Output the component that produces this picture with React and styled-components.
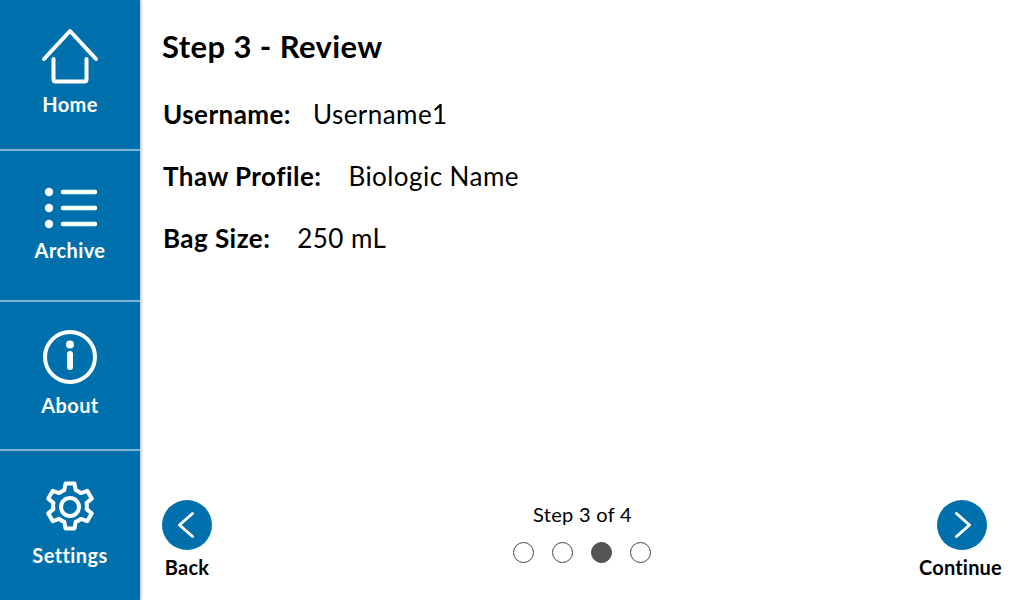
import React from 'react';
import styled, { createGlobalStyle } from 'styled-components';

const GlobalStyle = createGlobalStyle`
  html, body {
    margin: 0;
    padding: 0;
    background: #fff;
  }
  body {
    font-family: "Lato", "Noto Sans", sans-serif;
    color: #000;
  }
`;

const Screen = styled.div`
  display: flex;
  width: 1024px;
  height: 600px;
  overflow: hidden;
`;

const Sidebar = styled.nav`
  display: flex;
  flex-direction: column;
  flex: 0 0 140px;
  height: 600px;
  background: #0070ad;
  box-shadow: 1px 0 3px rgba(0, 0, 0, 0.3);
  z-index: 1;
`;

const NavItem = styled.div`
  display: flex;
  flex-direction: column;
  align-items: center;
  box-sizing: border-box;
  height: ${(p) => p.$height}px;
  padding-top: ${(p) => p.$top}px;
  color: #fff;
  border-bottom: ${(p) => (p.$last ? 'none' : '2px solid #7fb4d4')};
`;

const NavIcon = styled.svg`
  display: block;
  width: 60px;
  height: 60px;
  fill: none;
  stroke: #fff;
  stroke-width: 4;
  stroke-linecap: round;
  stroke-linejoin: round;
`;

const NavLabel = styled.span`
  margin-top: ${(p) => p.$gap}px;
  font-size: 20px;
  line-height: 24px;
  font-weight: 700;
  letter-spacing: 0.4px;
`;

const Main = styled.main`
  flex: 1;
  display: flex;
  flex-direction: column;
  padding: 29px 22px 0 22px;
`;

const Title = styled.h1`
  margin: 0 0 36px;
  font-size: 31px;
  line-height: 34px;
  font-weight: 700;
  letter-spacing: 0.4px;
`;

const Fields = styled.div`
  display: flex;
  flex-direction: column;
  gap: 32px;
  flex: 1;
  padding-left: 1px;
`;

const Field = styled.div`
  display: flex;
  gap: ${(p) => p.$gap}px;
  font-size: 26px;
  line-height: 30px;
  letter-spacing: 0.45px;
`;

const FieldName = styled.strong`
  font-weight: 700;
`;

const Footer = styled.div`
  display: flex;
  justify-content: space-between;
  align-items: flex-start;
  height: 100px;
`;

const NavButton = styled.div`
  display: flex;
  flex-direction: column;
  align-items: center;
  font-size: 20px;
  line-height: 24px;
  font-weight: 700;
  letter-spacing: 0.2px;
`;

const Round = styled.button`
  display: flex;
  align-items: center;
  justify-content: center;
  width: 50px;
  height: 50px;
  margin: 0 0 5px ${(p) => p.$nudge || 0}px;
  padding: 0;
  border: none;
  border-radius: 50%;
  background: #0070ad;
`;

const Chevron = styled.svg`
  width: 30px;
  height: 30px;
  fill: none;
  stroke: #fff;
  stroke-width: 3;
  stroke-linecap: round;
  stroke-linejoin: round;
`;

const Progress = styled.div`
  display: flex;
  flex-direction: column;
  align-items: center;
  margin-left: 34px;
  padding-top: 2px;
  font-size: 20px;
  line-height: 24px;
  letter-spacing: 0.3px;
`;

const Dots = styled.div`
  display: flex;
  gap: 18px;
  margin-top: 16px;
`;

const Dot = styled.span`
  box-sizing: border-box;
  width: 21px;
  height: 21px;
  border: 1.5px solid #444;
  border-radius: 50%;
  background: ${(p) => (p.$active ? '#555' : '#fff')};
`;

const Gear = () => (
  <NavIcon viewBox="0 0 60 60">
    <circle cx="30" cy="30" r="9" />
    <path d="M25.5 6.5h9l1.2 6.6a18 18 0 0 1 5.2 3l6.3-2.3 4.5 7.8-5.1 4.3a18 18 0 0 1 0 6.2l5.1 4.3-4.5 7.8-6.3-2.3a18 18 0 0 1-5.2 3l-1.2 6.6h-9l-1.2-6.6a18 18 0 0 1-5.2-3l-6.3 2.3-4.5-7.8 5.1-4.3a18 18 0 0 1 0-6.2l-5.1-4.3 4.5-7.8 6.3 2.3a18 18 0 0 1 5.2-3z" />
  </NavIcon>
);

export default function App() {
  return (
    <>
      <GlobalStyle />
      <Screen>
        <Sidebar>
          <NavItem $height={151} $top={26}>
            <NavIcon viewBox="0 0 60 60">
              <path d="M4 33 30 5l26 28" />
              <path d="M13.500 33v20.500a2 2 0 0 0 2 2h29a2 2 0 0 0 2-2V33" />
            </NavIcon>
            <NavLabel $gap={6}>Home</NavLabel>
          </NavItem>
          <NavItem $height={151} $top={27}>
            <NavIcon viewBox="0 0 60 60">
              <path d="M23 14h32M23 30h32M23 46h32" strokeWidth="4.500" />
              <circle cx="9" cy="14" r="4.200" fill="#fff" stroke="none" />
              <circle cx="9" cy="30" r="4.200" fill="#fff" stroke="none" />
              <circle cx="9" cy="46" r="4.200" fill="#fff" stroke="none" />
            </NavIcon>
            <NavLabel $gap={0}>Archive</NavLabel>
          </NavItem>
          <NavItem $height={149} $top={25}>
            <NavIcon viewBox="0 0 60 60">
              <circle cx="30" cy="30" r="25" />
              <path d="M30 27v13" strokeWidth="6" />
              <circle cx="30" cy="17.500" r="2" fill="#fff" />
            </NavIcon>
            <NavLabel $gap={6}>About</NavLabel>
          </NavItem>
          <NavItem $height={149} $top={26} $last>
            <Gear />
            <NavLabel $gap={6}>Settings</NavLabel>
          </NavItem>
        </Sidebar>
        <Main>
          <Title>Step 3 - Review</Title>
          <Fields>
            <Field $gap={22}>
              <FieldName>Username:</FieldName>
              <span>Username1</span>
            </Field>
            <Field $gap={27}>
              <FieldName>Thaw Profile:</FieldName>
              <span>Biologic Name</span>
            </Field>
            <Field $gap={27}>
              <FieldName>Bag Size:</FieldName>
              <span>250 mL</span>
            </Field>
          </Fields>
          <Footer>
            <NavButton>
              <Round aria-label="Back">
                <Chevron viewBox="0 0 30 30"><path d="M20.500 3.500 7.500 15l13 11.500" /></Chevron>
              </Round>
              Back
            </NavButton>
            <Progress>
              Step 3 of 4
              <Dots>
                <Dot />
                <Dot />
                <Dot $active />
                <Dot />
              </Dots>
            </Progress>
            <NavButton>
              <Round aria-label="Continue" $nudge={4}>
                <Chevron viewBox="0 0 30 30"><path d="M9.500 3.500 22.500 15l-13 11.500" /></Chevron>
              </Round>
              Continue
            </NavButton>
          </Footer>
        </Main>
      </Screen>
    </>
  );
}
